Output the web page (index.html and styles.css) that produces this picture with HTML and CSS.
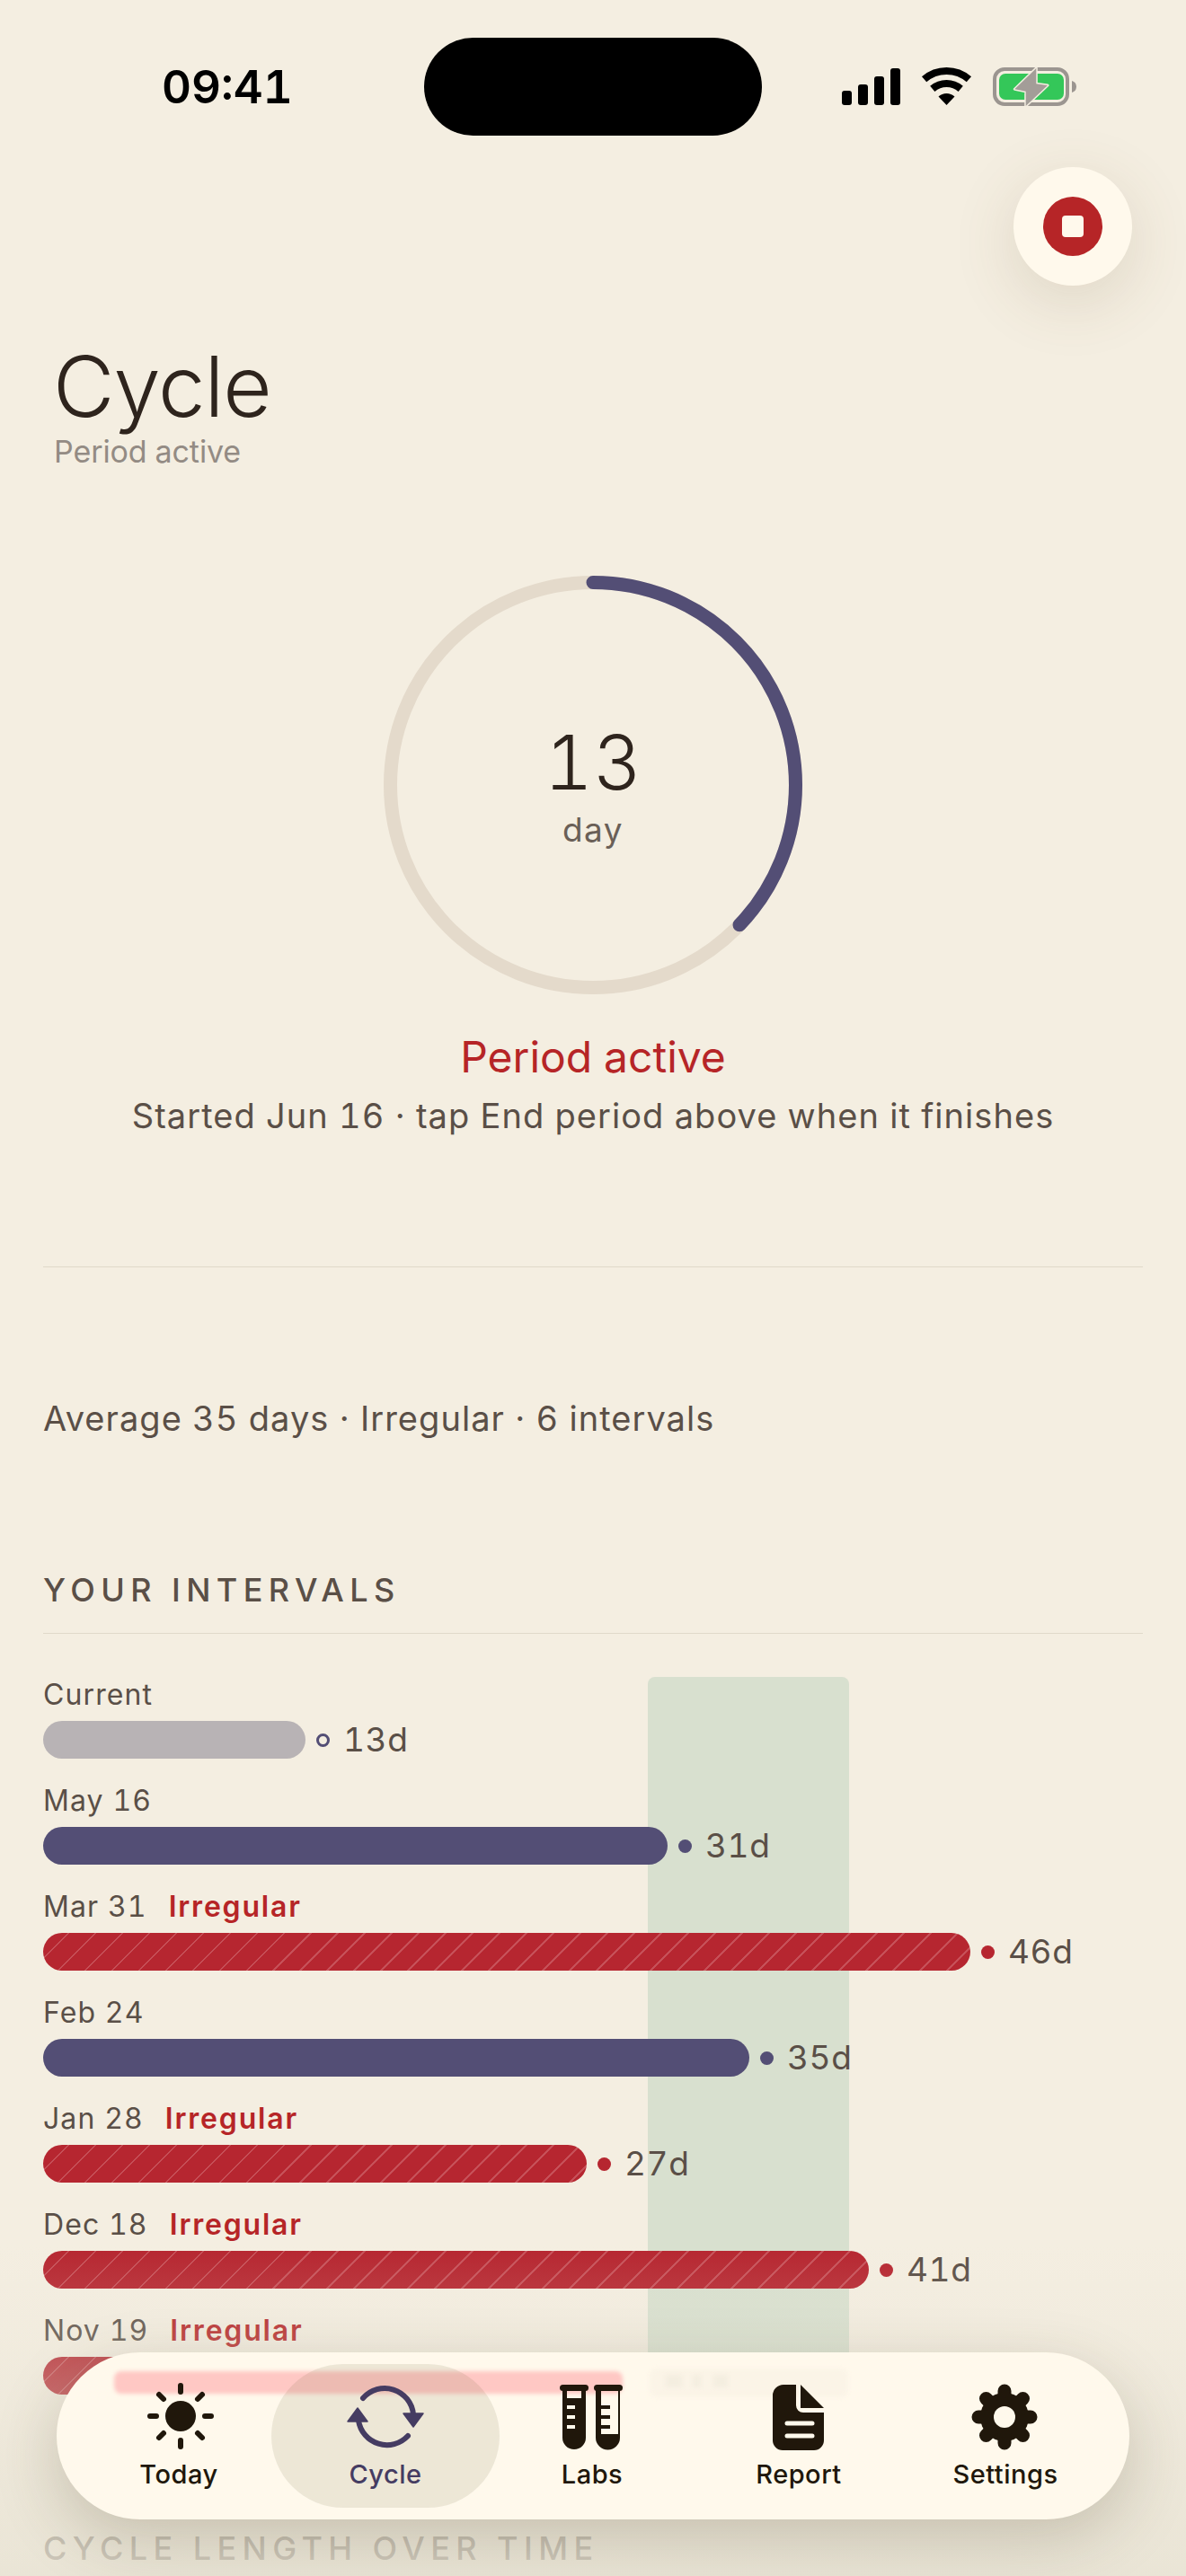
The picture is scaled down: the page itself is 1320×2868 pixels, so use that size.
FILE: index.html
```html
<!DOCTYPE html>
<html lang="en">
<head>
<meta charset="utf-8">
<title>Cycle</title>
<link rel="stylesheet" href="styles.css">
</head>
<body>
<div class="page">
  <header class="status">
    <span class="time">09:41</span>
    <span class="island"></span>
    <div class="status-icons">
      <svg class="signal" width="65" height="41" viewBox="0 0 65 41"><rect x="0" y="25" width="11" height="16" rx="3"/><rect x="18" y="18" width="11" height="23" rx="3"/><rect x="36" y="9" width="11" height="32" rx="3"/><rect x="54" y="0" width="11" height="41" rx="3"/></svg>
      <svg class="wifi" width="57" height="42" viewBox="0 0 57 42"><path d="M3.6 13.3A38 38 0 0 1 53.4 13.3" fill="none" stroke="#000" stroke-width="8"/><path d="M12.8 23.9A24 24 0 0 1 44.2 23.9" fill="none" stroke="#000" stroke-width="8"/><path d="M28.5 42L19.5 32.5A13 13 0 0 1 37.5 32.5Z"/></svg>
      <svg class="battery" width="93" height="44" viewBox="0 0 93 44"><rect x="2" y="2" width="81" height="39" rx="11" fill="none" stroke="#9b9590" stroke-width="4"/><rect x="7" y="7" width="72" height="29" rx="7" fill="#34c759"/><path d="M88 15a7 7 0 0 1 5 6.500a7 7 0 0 1-5 6.500Z" fill="#9b9590"/><path d="M48.300 1L24.300 24.300L36.700 26.700L36.700 43L61 20L48.300 18.300Z" fill="#a39d98" stroke="#f4eee1" stroke-width="3" paint-order="stroke" stroke-linejoin="round"/></svg>
    </div>
  </header>

  <button class="fab" type="button" aria-label="End period"><span class="fab-dot"><span class="fab-square"></span></span></button>

  <section class="head">
    <h1 class="title">Cycle</h1>
    <p class="subtitle">Period active</p>
  </section>

  <section class="ring-wrap">
    <div class="ring">
      <svg width="466" height="466" viewBox="0 0 466 466">
        <circle cx="233" cy="233" r="225.500" fill="none" stroke="#e4dacb" stroke-width="15"/>
        <circle cx="233" cy="233" r="225.500" fill="none" stroke="#534e75" stroke-width="15" stroke-linecap="round" stroke-dasharray="526 1420" transform="rotate(-90 233 233)"/>
      </svg>
      <div class="ring-text">
        <span class="ring-num">13</span>
        <span class="ring-label">day</span>
      </div>
    </div>
    <p class="state">Period active</p>
    <p class="state-note">Started Jun 16 · tap End period above when it finishes</p>
  </section>

  <hr class="rule">

  <p class="summary">Average 35 days · Irregular · 6 intervals</p>

  <h2 class="section-title">YOUR INTERVALS</h2>

  <section class="intervals">
    <div class="band"></div>

    <div class="row">
      <div class="row-label">Current</div>
      <div class="row-bar"><span class="bar bar-current" style="width:292px"></span><span class="dot dot-ring"></span><span class="days">13d</span></div>
    </div>
    <div class="row">
      <div class="row-label">May 16</div>
      <div class="row-bar"><span class="bar bar-normal" style="width:695px"></span><span class="dot dot-normal"></span><span class="days">31d</span></div>
    </div>
    <div class="row">
      <div class="row-label">Mar 31<span class="flag">Irregular</span></div>
      <div class="row-bar"><span class="bar bar-irregular" style="width:1032px"></span><span class="dot dot-irregular"></span><span class="days">46d</span></div>
    </div>
    <div class="row">
      <div class="row-label">Feb 24</div>
      <div class="row-bar"><span class="bar bar-normal" style="width:786px"></span><span class="dot dot-normal"></span><span class="days">35d</span></div>
    </div>
    <div class="row">
      <div class="row-label">Jan 28<span class="flag">Irregular</span></div>
      <div class="row-bar"><span class="bar bar-irregular" style="width:605px"></span><span class="dot dot-irregular"></span><span class="days">27d</span></div>
    </div>
    <div class="row">
      <div class="row-label">Dec 18<span class="flag">Irregular</span></div>
      <div class="row-bar"><span class="bar bar-irregular" style="width:919px"></span><span class="dot dot-irregular"></span><span class="days">41d</span></div>
    </div>
    <div class="row">
      <div class="row-label">Nov 19<span class="flag">Irregular</span></div>
      <div class="row-bar"><span class="bar bar-irregular" style="width:650px"></span><span class="dot dot-irregular"></span><span class="days">29d</span></div>
    </div>
  </section>

  <h2 class="section-title section-next">CYCLE LENGTH OVER TIME</h2>

  <div class="fade"></div>

  <nav class="tabbar">
    <span class="ghost ghost-bar"></span>
    <span class="ghost ghost-band"></span>
    <span class="ghost ghost-blob ghost-a"></span>
    <span class="ghost ghost-blob ghost-b"></span>
    <span class="ghost ghost-blob ghost-c"></span>

    <a class="tab">
      <svg class="icon" width="80" height="80" viewBox="0 0 80 80">
        <circle cx="42" cy="39" r="17"/>
        <g stroke="#20170b" stroke-width="6" stroke-linecap="round" fill="none">
          <path d="M42 5V12M42 66V73M8 39H15M69 39H76M18 15L23 20M61 58L66 63M18 63L23 58M61 20L66 15"/>
        </g>
      </svg>
      <span class="tab-label">Today</span>
    </a>
    <a class="tab tab-active">
      <span class="tab-pill"></span>
      <svg class="icon" width="90" height="80" viewBox="0 0 90 80">
        <path d="M20 19A32 32 0 0 1 76 37M70 61A32 32 0 0 1 15 44" fill="none" stroke="#453c62" stroke-width="6" stroke-linecap="round"/>
        <path d="M65 36H87L76 51ZM3 45H25L14 30Z" fill="#453c62" stroke="#453c62" stroke-width="1.500" stroke-linejoin="round"/>
      </svg>
      <span class="tab-label">Cycle</span>
    </a>
    <a class="tab">
      <svg class="icon" width="80" height="80" viewBox="0 0 80 80">
        <path fill-rule="evenodd" d="M7 10H33V63A13 13 0 0 1 7 63ZM12 10V19H28V10ZM12 27V31H21V27ZM12 38V42H21V38ZM12 49V53H21V49Z"/>
        <path fill-rule="evenodd" d="M44 10H71V63A13.500 13.500 0 0 1 44 63ZM50 10V59H69V10Z"/>
        <path d="M50 27H60V31H50ZM50 38H60V42H50ZM50 49H60V53H50Z"/>
        <rect x="4" y="4" width="32" height="7" rx="3.500"/>
        <rect x="42" y="4" width="32" height="7" rx="3.500"/>
      </svg>
      <span class="tab-label">Labs</span>
    </a>
    <a class="tab">
      <svg class="icon" width="80" height="80" viewBox="0 0 80 80">
        <path d="M23 4H37V27A8 8 0 0 0 45 35H68V66A11 11 0 0 1 57 77H22A11 11 0 0 1 11 66V16A12 12 0 0 1 23 4Z"/>
        <path d="M42 4L68 30H42Z"/>
        <path d="M27 47H55M27 61H55" stroke="#fff9ec" stroke-width="5" stroke-linecap="round" fill="none"/>
      </svg>
      <span class="tab-label">Report</span>
    </a>
    <a class="tab">
      <svg class="icon" width="80" height="80" viewBox="0 0 80 80">
        <circle cx="39" cy="40" r="27"/>
        <g stroke="#20170b" stroke-width="15" stroke-linecap="round" fill="none">
          <path d="M39 11V69M10 40H68M18.500 19.500L59.500 60.500M18.500 60.500L59.500 19.500"/>
        </g>
        <circle cx="39" cy="40" r="12" fill="#fff9ec"/>
      </svg>
      <span class="tab-label">Settings</span>
    </a>
  </nav>
</div>
</body>
</html>
```

FILE: styles.css
```css
* { box-sizing: border-box; }
html, body { margin: 0; padding: 0; }
body { background: #f4eee1; font-family: Inter, "Liberation Sans", sans-serif; font-variant-numeric: tabular-nums; color: #5a4f47; }
p, h1, h2 { margin: 0; font-weight: inherit; }

.page { position: relative; width: 1320px; height: 2868px; overflow: hidden; background: #f4eee1; }

.status { position: relative; display: flex; align-items: center; justify-content: space-between; height: 194px; padding: 0 122px 0 180px; }
.time { font-size: 51px; font-weight: 600; line-height: 60px; color: #000; letter-spacing: 0; }
.island { position: absolute; left: 472px; top: 42px; width: 376px; height: 109px; border-radius: 55px; background: #000; }
.status-icons { display: flex; align-items: flex-start; }
.signal { margin-right: 23px; margin-top: 1px; }
.wifi { margin-right: 23px; }
.battery { display: block; }

.fab { position: absolute; left: 1128px; top: 186px; width: 132px; height: 132px; display: flex; align-items: center; justify-content: center; padding: 0; border: 0; border-radius: 50%; background: #fff9ec; box-shadow: 0 18px 70px rgba(110, 90, 50, .16); }
.fab-dot { display: flex; align-items: center; justify-content: center; width: 66px; height: 66px; border-radius: 50%; background: #b62527; }
.fab-square { width: 24px; height: 24px; border-radius: 4px; background: #fff9ec; }

.head { margin-top: 186px; padding: 0 59px; }
.title { font-size: 94px; font-weight: 300; line-height: 100px; letter-spacing: -1px; color: #2e241d; }
.subtitle { font-size: 34px; line-height: 40px; color: #938b84; margin: 3px 0 0 1px; letter-spacing: -.1px; }

.ring-wrap { display: flex; flex-direction: column; align-items: center; margin-top: 118px; }
.ring { position: relative; width: 466px; height: 466px; }
.ring svg { display: block; }
.ring-text { position: absolute; inset: 0; display: flex; flex-direction: column; align-items: center; justify-content: center; padding-bottom: 2px; }
.ring-num { font-size: 84px; font-weight: 300; line-height: 100px; color: #2e241d; }
.ring-label { font-size: 37px; line-height: 46px; color: #6a5f57; letter-spacing: 1.500px; margin-top: 2px; }
.state { margin-top: 40px; font-size: 48px; line-height: 60px; color: #b62527; }
.state-note { margin-top: 10px; font-size: 38px; line-height: 50px; letter-spacing: 1.050px; }

.rule { height: 1px; margin: 143px 48px 0; border: 0; background: #e0d9ca; }

.summary { margin: 143px 48px 0; font-size: 38px; line-height: 50px; letter-spacing: 1.050px; }

.section-title { margin: 146px 48px 0; padding-bottom: 28px; font-size: 36px; font-weight: 500; line-height: 40px; letter-spacing: 6.400px; border-bottom: 1px solid #e0d9ca; }
.section-next { margin-top: 151px; border-bottom: 0; }

.intervals { position: relative; display: flex; flex-direction: column; gap: 27px; margin: 48px 48px 0; }
.band { position: absolute; left: 673px; top: 0; width: 224px; height: 803px; border-radius: 8px; background: #d8e0cf; }
.row { position: relative; height: 91px; }
.row-label { height: 40px; font-size: 32px; line-height: 40px; letter-spacing: 1.100px; white-space: nowrap; }
.flag { margin-left: 24px; font-weight: 600; letter-spacing: 1.800px; color: #b62527; }
.row-bar { display: flex; align-items: center; height: 42px; margin-top: 9px; }
.bar { display: block; height: 42px; border-radius: 21px; flex: none; }
.bar-current { background: #b8b3b5; }
.bar-normal { background: #534e75; }
.bar-irregular { background: repeating-linear-gradient(135deg, #b62630 0, #b62630 19.200px, #c65058 19.200px, #c65058 21.200px); }
.dot { flex: none; width: 15px; height: 15px; margin: 0 15px 0 12px; border-radius: 50%; }
.dot-normal { background: #534e75; }
.dot-irregular { background: #b62630; }
.dot-ring { border: 3px solid #534e75; }
.days { font-size: 37px; line-height: 42px; letter-spacing: .6px; }

.fade { position: absolute; left: 0; right: 0; bottom: 0; height: 368px; background: linear-gradient(180deg, rgba(232, 227, 212, 0) 0, rgba(232, 227, 212, .17) 24%, rgba(232, 227, 212, .3) 38%, rgba(232, 227, 212, .85) 100%); }

.tabbar { position: absolute; left: 63px; top: 2619px; width: 1194px; height: 186px; display: grid; grid-template-columns: repeat(5, 230px); padding: 32px 21px 0; border-radius: 93px; background: #fff9ec; box-shadow: 0 22px 70px rgba(70, 58, 30, .22); }
.ghost { position: absolute; filter: blur(2px); }
.ghost-bar { left: 64px; top: 21px; width: 566px; height: 25px; border-radius: 8px; background: #ffc8c4; }
.ghost-band { left: 660px; top: 18px; width: 221px; height: 32px; border-radius: 8px; background: #fbf4e7; }
.ghost-blob { top: 25px; height: 14px; background: #f4eee0; }
.ghost-a { left: 678px; width: 18px; }
.ghost-b { left: 708px; width: 9px; }
.ghost-c { left: 731px; width: 16px; }

.tab { position: relative; display: flex; flex-direction: column; align-items: center; color: #20170b; }
.tab-active { color: #453c62; }
.tab-pill { position: absolute; left: -12px; right: -12px; top: -19px; height: 160px; border-radius: 80px; background: rgba(60, 50, 0, .09); }
.icon { position: relative; display: block; fill: #20170b; }
.tab-label { position: relative; margin-top: 6px; font-size: 29px; font-weight: 500; line-height: 36px; letter-spacing: .5px; }
```
